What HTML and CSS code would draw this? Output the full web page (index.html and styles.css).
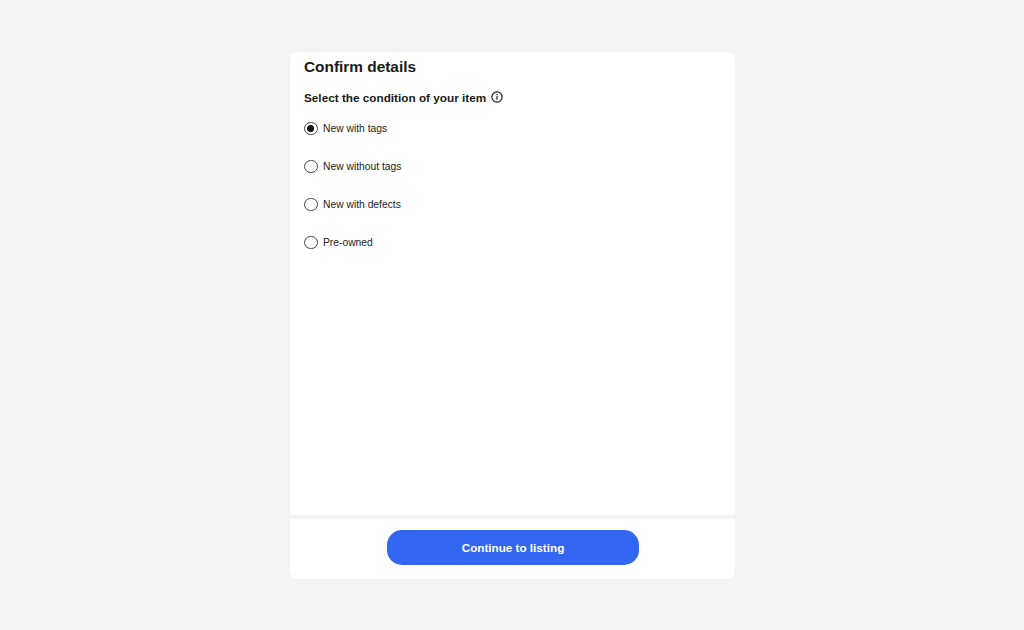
FILE: index.html
```html
<!DOCTYPE html>
<html lang="en">
<head>
<meta charset="utf-8">
<title>Confirm details</title>
<link rel="stylesheet" href="styles.css">
</head>
<body>
<main class="card">
  <section class="content">
    <h1 class="title">Confirm details</h1>
    <h2 class="subtitle">Select the condition of your item
      <svg class="info" viewBox="0 0 12 12" width="12" height="12" aria-hidden="true">
        <circle cx="6" cy="6" r="5.1" fill="none" stroke="#1a1a1a" stroke-width="1.2"/>
        <rect x="5.4" y="5.1" width="1.2" height="3.6" fill="#1a1a1a"/>
        <rect x="5.4" y="3" width="1.2" height="1.2" fill="#1a1a1a"/>
      </svg>
    </h2>
    <div class="options">
      <label class="option"><span class="radio checked"></span>New with tags</label>
      <label class="option"><span class="radio"></span>New without tags</label>
      <label class="option"><span class="radio"></span>New with defects</label>
      <label class="option"><span class="radio"></span>Pre-owned</label>
    </div>
  </section>
  <footer class="footer">
    <button class="cta" type="button">Continue to listing</button>
  </footer>
</main>
</body>
</html>
```
FILE: styles.css
```css
* { box-sizing: border-box; }
html, body { margin: 0; height: 630px; overflow: hidden; }
body {
  background: #f4f4f4;
  font-family: "Liberation Sans", Arial, sans-serif;
  color: #1a1a1a;
  display: flex;
  justify-content: center;
  padding-top: 52px;
}
.card {
  width: 445px;
  height: 527px;
  background: #fff;
  border-radius: 8px;
  display: flex;
  flex-direction: column;
  overflow: hidden;
}
.content {
  flex: 1;
  padding: 6px 14.5px 0;
}
.title {
  margin: 0;
  font-size: 15.4px;
  line-height: 18px;
  font-weight: 700;
}
.subtitle {
  margin: 14px 0 0;
  font-size: 11.75px;
  line-height: 15px;
  font-weight: 700;
  display: flex;
  align-items: center;
  gap: 4.5px;
}
.info { margin-top: -2px; }
.options {
  margin-top: 16.4px;
  display: flex;
  flex-direction: column;
  gap: 24px;
}
.option {
  display: flex;
  align-items: center;
  gap: 5.5px;
  height: 14px;
  font-size: 10.3px;
  color: #222;
}
.radio {
  width: 13.5px;
  height: 13.5px;
  border: 1.2px solid #444;
  border-radius: 50%;
  background: #fff;
  display: flex;
  align-items: center;
  justify-content: center;
}
.radio.checked::after {
  content: "";
  width: 7px;
  height: 7px;
  border-radius: 50%;
  background: #111;
}
.footer {
  height: 64px;
  border-top: 4px solid #f4f4f4;
  display: flex;
  justify-content: center;
  padding-top: 11px;
}
.cta {
  width: 252px;
  height: 35px;
  margin-left: 2px;
  border: 0;
  border-radius: 15px;
  background: #3366f0;
  color: #fff;
  font: 700 11.7px "Liberation Sans", Arial, sans-serif;
}
```
